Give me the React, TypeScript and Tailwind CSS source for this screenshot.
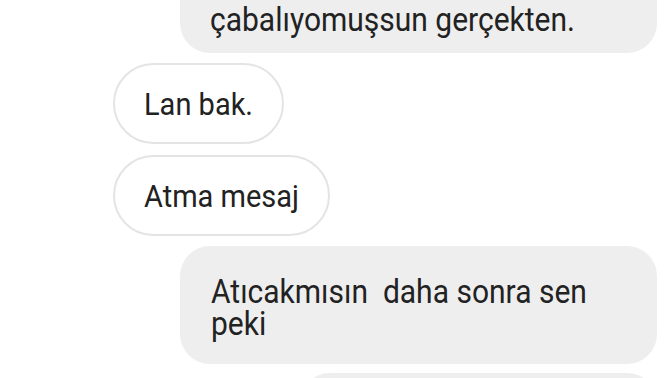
const font = { fontFamily: "Roboto, 'Noto Sans', sans-serif" };

function Theirs({ children }: { children: React.ReactNode }) {
  return (
    <div className="ml-[113px] flex h-[81px] w-fit shrink-0 items-center rounded-full border-2 border-[#e4e4e4] bg-white px-[29px]">
      <span className="inline-block scale-y-[1.1] text-[29px] leading-[32px] text-[#222]">
        {children}
      </span>
    </div>
  );
}

export default function App() {
  return (
    <div
      className="flex h-[378px] w-[672px] flex-col overflow-hidden bg-white antialiased"
      style={font}
    >
      {/* previous message, cut off at the top */}
      <div className="mr-[15px] flex h-[53px] w-[477px] shrink-0 items-end self-end rounded-b-[30px] bg-[#eeeeee] pb-[17px] pl-[30px]">
        <p className="scale-y-[1.1] text-[30px] leading-[32px] text-[#222]">
          çabalıyomuşsun gerçekten.
        </p>
      </div>

      <div className="mt-[10px]">
        <Theirs>Lan bak.</Theirs>
      </div>
      <div className="mt-[11px]">
        <Theirs>Atma mesaj</Theirs>
      </div>

      <div className="mr-[15px] mt-[10px] w-[477px] shrink-0 self-end rounded-[30px] bg-[#eeeeee] pb-[28px] pl-[31px] pr-[40px] pt-[32px]">
        <p className="origin-center scale-y-[1.1] whitespace-pre-wrap text-[30px] leading-[29px] text-[#222]">
          {"Atıcakmısın  daha sonra sen peki"}
        </p>
      </div>

      <div className="mr-[15px] mt-[9px] h-[60px] w-[357px] shrink-0 self-end rounded-[30px] bg-[#eeeeee]" />
    </div>
  );
}
